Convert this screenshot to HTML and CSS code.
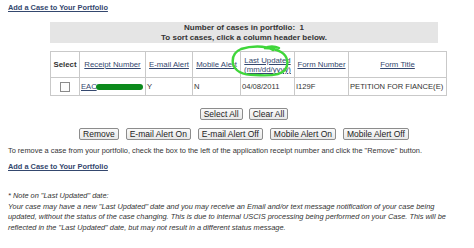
FILE: index.html
```html
<!DOCTYPE html>
<html>
<head>
<meta charset="utf-8">
<link rel="stylesheet" href="styles.css">
</head>
<body>
<div class="page">
  <a class="add-link top" href="#">Add a Case to Your Portfolio</a>
  <div class="portfolio">
    <div class="summary">
      <div>Number of cases in portfolio:&nbsp; 1</div>
      <div>To sort cases, click a column header below.</div>
    </div>
    <div class="table-wrap">
      <table class="cases">
        <thead>
          <tr>
            <th class="c-select">Select</th>
            <th class="c-receipt"><a href="#">Receipt Number</a></th>
            <th class="c-email"><a href="#">E-mail Alert</a></th>
            <th class="c-mobile"><a href="#">Mobile Alert</a></th>
            <th class="c-updated"><a href="#">Last Updated<br>(mm/dd/yyyy)</a></th>
            <th class="c-formnum"><a href="#">Form Number</a></th>
            <th class="c-title"><a href="#">Form Title</a></th>
          </tr>
        </thead>
        <tbody>
          <tr>
            <td class="center"><span class="checkbox"></span></td>
            <td><a href="#">EAC</a><span class="redact"></span></td>
            <td>Y</td>
            <td>N</td>
            <td>04/08/2011</td>
            <td>I129F</td>
            <td>PETITION FOR FIANCE(E)</td>
          </tr>
        </tbody>
      </table>
      <svg class="circle" width="60" height="32" viewBox="0 0 60 32">
        <path d="M42 5 C34 0 19 1 10 4 C3 7 1 13 2 19 C4 26 12 30 24 30 C37 31 50 30 54 25 C58 19 57 11 50 7 C45 4 39 3 33 3 C38 1 44 1 48 3" fill="none" stroke="#3fd63a" stroke-width="2.4" stroke-linecap="round"/>
      </svg>
    </div>
    <div class="btn-row first">
      <button class="btn">Select All</button>
      <button class="btn">Clear All</button>
    </div>
    <div class="btn-row second">
      <button class="btn">Remove</button>
      <button class="btn">E-mail Alert On</button>
      <button class="btn">E-mail Alert Off</button>
      <button class="btn">Mobile Alert On</button>
      <button class="btn">Mobile Alert Off</button>
    </div>
  </div>
  <p class="instr">To remove a case from your portfolio, check the box to the left of the application receipt number and click the "Remove" button.</p>
  <a class="add-link bottom" href="#">Add a Case to Your Portfolio</a>
  <p class="note">* Note on "Last Updated" date:<br>Your case may have a new "Last Updated" date and you may receive an Email and/or text message notification of your case being<br>updated, without the status of the case changing. This is due to internal USCIS processing being performed on your Case. This will be<br>reflected in the "Last Updated" date, but may not result in a different status message.</p>
</div>
</body>
</html>
```

FILE: styles.css
```css
html, body {
  margin: 0;
  padding: 0;
  background: #ffffff;
}
body {
  font-family: "Liberation Sans", Arial, sans-serif;
  font-size: 7.4px;
  color: #333333;
}
.page {
  padding: 3px 8px 0 8px;
  display: flex;
  flex-direction: column;
  align-items: flex-start;
}
a {
  color: #34476e;
  text-decoration: underline;
}
.add-link {
  font-weight: bold;
  line-height: 10px;
}
.portfolio {
  margin-left: 42px;
  margin-top: 9px;
  width: 388px;
  display: flex;
  flex-direction: column;
}
.summary {
  background: #e5e5e5;
  font-weight: bold;
  font-size: 8px;
  text-align: center;
  line-height: 10px;
  padding: 1px 0 0 0;
  height: 20px;
}
.table-wrap {
  position: relative;
  margin-top: 8px;
}
.cases {
  border-collapse: collapse;
  table-layout: fixed;
  width: 389px;
  border: 1px solid #c9c9c9;
  font-size: 7.8px;
}
.cases th, .cases td {
  border: 1px solid #c9c9c9;
  padding: 0 1px;
  white-space: nowrap;
  overflow: hidden;
}
.cases th {
  height: 25px;
  font-weight: normal;
  line-height: 9px;
  text-align: center;
}
.cases th.c-select {
  font-weight: bold;
  color: #333;
}
.cases td {
  height: 17px;
  text-align: left;
  font-size: 7.6px;
}
.cases td.center {
  text-align: center;
}
.c-select { width: 26px; }
.c-receipt { width: 63px; }
.c-email { width: 44px; }
.c-mobile { width: 45px; }
.c-updated { width: 51px; }
.c-formnum { width: 51px; }
.c-title { width: 95px; }
.checkbox {
  display: inline-block;
  width: 8px;
  height: 8px;
  border: 1px solid #8a8a8a;
  background: #fbfbfb;
  vertical-align: middle;
}
.redact {
  display: inline-block;
  width: 47px;
  height: 6px;
  background: #0c8a1c;
  border-radius: 3px;
  vertical-align: middle;
  margin-left: -1px;
}
.circle {
  position: absolute;
  left: 181px;
  top: -6px;
}
.btn-row {
  display: flex;
  justify-content: center;
  gap: 6px;
}
.btn-row.first {
  margin-top: 12px;
}
.btn-row.second {
  margin-top: 8px;
  gap: 7px;
}
.btn {
  font-family: "Liberation Sans", Arial, sans-serif;
  font-size: 8.5px;
  color: #222;
  height: 12px;
  line-height: 10px;
  padding: 0 3px;
  border: 1px solid #8c8c8c;
  border-radius: 2px;
  background: linear-gradient(#fafafa, #e8e8e8);
  margin: 0;
}
.instr {
  margin: 6px 0 0 0;
  line-height: 10px;
  white-space: nowrap;
}
.add-link.bottom {
  margin-top: 6px;
}
.note {
  margin: 19px 0 0 0;
  font-style: italic;
  line-height: 10.7px;
  white-space: nowrap;
}
```
